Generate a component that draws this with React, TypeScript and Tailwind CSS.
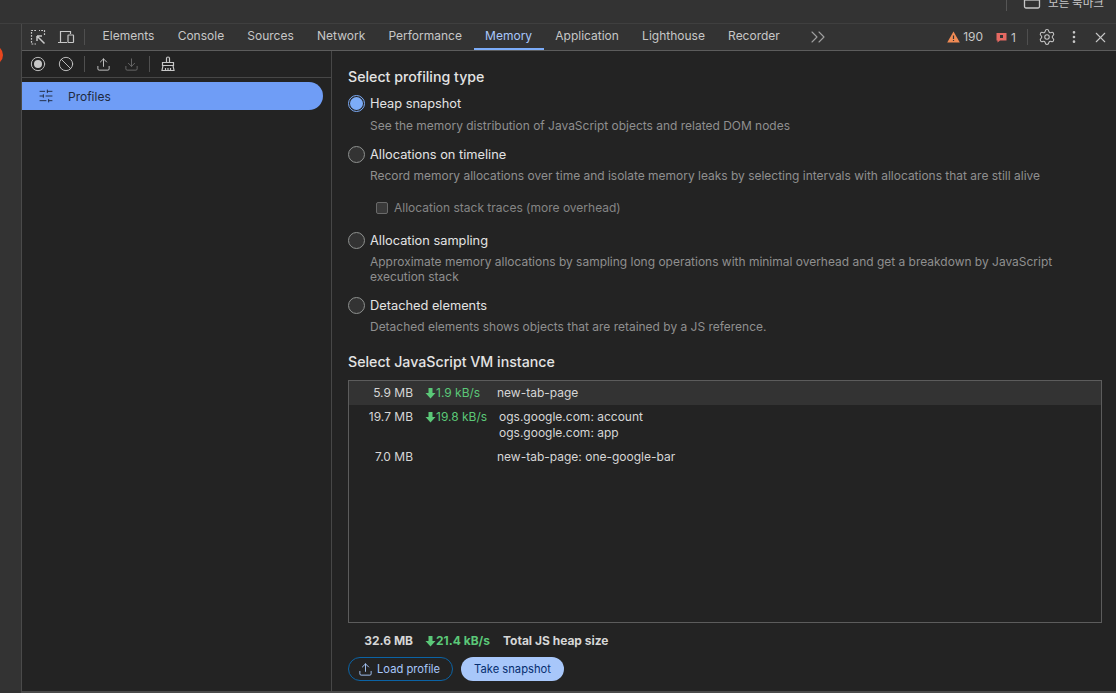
import { Circle, Ban, Upload, Download, EllipsisVertical, X, ChevronsRight, SlidersHorizontal, Settings } from 'lucide-react';

const tabs = ['Elements', 'Console', 'Sources', 'Network', 'Performance', 'Memory', 'Application', 'Lighthouse', 'Recorder'];

function Radio({ checked }: { checked?: boolean }) {
  return (
    <span className={`w-[17px] h-[17px] -mt-[2px] rounded-full border flex items-center justify-center shrink-0 ${checked ? 'border-[#7cacf8]' : 'border-[#8e918f] bg-[#333333]'}`}>
      {checked && <span className="w-[13px] h-[13px] rounded-full bg-[#7cacf8]" />}
    </span>
  );
}

function Option({ label, desc, checked, className, descClass = 'mt-[4px]' }: { label: string; desc: string; checked?: boolean; className?: string; descClass?: string }) {
  return (
    <div className={className}>
      <div className="flex items-center gap-[5px] h-[18px] text-[12.8px] text-[#e3e3e3]">
        <Radio checked={checked} />
        {label}
      </div>
      <p className={`ml-[22px] text-[11.98px] leading-[15px] text-[#8f8f8f] ${descClass}`}>{desc}</p>
    </div>
  );
}

function Speed({ value, bold }: { value: string; bold?: boolean }) {
  return (
    <span className={`flex items-center text-[#5bc878] ${bold ? 'font-bold' : ''}`}>
      <svg width="11" height="12" viewBox="0 0 11 12" fill="currentColor">
        <path d="M3.5 1h4v5h3L5.5 11.5.5 6h3z" />
      </svg>
      {value}
    </span>
  );
}

export default function App() {
  return (
    <div className="w-[1116px] h-[693px] overflow-hidden flex flex-col bg-[#333333] text-[12px] font-['Inter',sans-serif] text-[#c7c7c7]">
      {/* browser bookmarks bar, cut off at the top */}
      <div className="h-[24px] shrink-0 flex items-start justify-end border-b border-[#3f3f3f] overflow-hidden">
        <div className="w-px h-[11px] bg-[#555555] mr-[16px]" />
        <svg width="18" height="16" viewBox="0 0 18 16" fill="none" stroke="#c7c7c7" strokeWidth="1.3" className="mr-[7px] -mt-[6px]">
          <path d="M1.5 3.5a1.5 1.5 0 0 1 1.5-1.5h12a1.5 1.5 0 0 1 1.5 1.5v9a1.5 1.5 0 0 1-1.5 1.5H3a1.5 1.5 0 0 1-1.5-1.5z" />
          <path d="M1.5 6h15" />
        </svg>
        <span className="mr-[12px] -mt-[6px] text-[11.6px] leading-[16px] font-['Noto_Sans_CJK_KR',sans-serif]">모든 북마크</span>
      </div>

      <div className="flex flex-1 min-h-0">
        {/* sliver of the page behind devtools */}
        <div className="w-[21px] shrink-0 relative overflow-hidden">
          <span className="absolute -left-[17px] top-[21px] w-[20px] h-[20px] rounded-full bg-[#e8461e]" />
        </div>

        <div className="flex-1 min-w-0 flex flex-col border-l border-[#4a4a4a] border-b-2">
          {/* main tab bar */}
          <div className="h-[27px] shrink-0 flex items-center border-b border-[#5c5c5c]">
            <div className="flex items-center pl-[8px] text-[#c7c7c7]">
              <svg width="16" height="16" viewBox="0 0 16 16" fill="none" stroke="currentColor" strokeWidth="1.2">
                <path d="M6 1.5H1.5V15H6M14.5 6V1.5H9" strokeDasharray="1.8 1.2" />
                <path d="M7 7l7.5 7.5M7 7v5M7 7h5" strokeWidth="1.5" />
              </svg>
              <svg width="18" height="16" viewBox="0 0 18 16" fill="none" stroke="currentColor" strokeWidth="1.2" className="ml-[11px]">
                <path d="M3.5 13V2.5h10V5M1 13.5h9" />
                <rect x="11" y="6" width="5.5" height="7.5" rx="0.5" />
              </svg>
              <span className="w-px h-[16px] bg-[#4f4f4f] ml-[9px]" />
            </div>
            <div className="flex items-center h-full ml-[6px]">
              {tabs.map((t) => (
                <div
                  key={t}
                  className={`h-full flex items-center px-[11.6px] border-b-2 ${t === 'Memory' ? 'border-[#7cacf8] text-[#a8c7fa]' : 'border-transparent'}`}
                >
                  {t}
                </div>
              ))}
              <ChevronsRight size={24} strokeWidth={1.1} className="ml-[15px] text-[#a0a0a0]" />
            </div>
            <div className="ml-auto flex items-center pr-[7px]">
              <svg width="13" height="12" viewBox="0 0 13 12" className="mr-[3px]">
                <path d="M6.5 0.5L12.8 11.5H0.2z" fill="#f28b54" />
                <path d="M6.5 4.5v3.5M6.5 9v1" stroke="#333333" strokeWidth="1.2" />
              </svg>
              <span>190</span>
              <svg width="11" height="11" viewBox="0 0 11 11" className="ml-[13px] mr-[4px]">
                <path d="M0.5 1h10v7.5H4L1.5 10.5V8.5h-1z" fill="#e46962" />
                <rect x="4" y="3" width="3" height="3" fill="#333333" />
              </svg>
              <span className="mt-[1px]">1</span>
              <span className="w-px h-[16px] bg-[#4f4f4f] ml-[11px]" />
              <Settings size={18} strokeWidth={1.4} className="ml-[10px]" />
              <EllipsisVertical size={16} strokeWidth={2} className="ml-[10px]" />
              <X size={17} strokeWidth={1.5} className="ml-[10px]" />
            </div>
          </div>

          <div className="flex flex-1 min-h-0 bg-[#232323]">
            {/* profiles sidebar */}
            <div className="w-[310px] shrink-0 border-r border-[#474747] flex flex-col">
              <div className="h-[27px] shrink-0 flex items-center pl-[8px] border-b border-[#474747]">
                <Circle size={16} strokeWidth={1.4} className="text-[#c7c7c7] fill-none" />
                <span className="w-[8px] h-[8px] rounded-full bg-[#c7c7c7] -ml-[12px]" />
                <Ban size={16} strokeWidth={1.4} className="ml-[16px]" />
                <span className="w-px h-[16px] bg-[#4f4f4f] ml-[10px]" />
                <Upload size={15} strokeWidth={1.5} className="ml-[11px]" />
                <Download size={15} strokeWidth={1.5} className="ml-[13px] text-[#6a6a6a]" />
                <span className="w-px h-[16px] bg-[#4f4f4f] ml-[10px]" />
                <svg width="16" height="16" viewBox="0 0 16 16" fill="none" stroke="currentColor" strokeWidth="1.2" className="ml-[10px]">
                  <path d="M6.5 6V2.5a1.5 1.5 0 0 1 3 0V6M2.5 6.5h11v3h-11zM3 9.5l-1 5h12l-1-5M5.5 12v2.5M8 12v2.5M10.5 12v2.5" />
                </svg>
              </div>
              <div className="mt-[4px] mr-[8px] h-[28px] rounded-r-full bg-[#6f9df6] flex items-center text-[#1f2a40]">
                <SlidersHorizontal size={16} strokeWidth={1.4} className="ml-[16px]" />
                <span className="ml-[14px] mt-[2px]">Profiles</span>
              </div>
            </div>

            {/* profiling launcher */}
            <div className="flex-1 min-w-0 flex flex-col pl-[16px] pr-[14px]">
              <h2 className="mt-[17px] text-[14.2px] leading-[17px] font-medium text-[#e3e3e3]">Select profiling type</h2>
              <Option className="mt-[10px]" descClass="mt-[5px]" checked label="Heap snapshot" desc="See the memory distribution of JavaScript objects and related DOM nodes" />
              <Option className="mt-[13px]" label="Allocations on timeline" desc="Record memory allocations over time and isolate memory leaks by selecting intervals with allocations that are still alive" />
              <div className="ml-[28px] mt-[17px] flex items-center gap-[6px] h-[15px] text-[#858585]">
                <span className="w-[12px] h-[12px] rounded-[2px] border border-[#6a6a6a] bg-[#3a3a3a]" />
                Allocation stack traces (more overhead)
              </div>
              <Option className="mt-[17px]" label="Allocation sampling" desc="Approximate memory allocations by sampling long operations with minimal overhead and get a breakdown by JavaScript execution stack" />
              <Option className="mt-[13px]" label="Detached elements" desc="Detached elements shows objects that are retained by a JS reference." />
              <h2 className="mt-[19px] text-[14.2px] leading-[17px] font-medium text-[#e3e3e3]">Select JavaScript VM instance</h2>

              <div className="mt-[10px] h-[243px] shrink-0 border border-[#5c5c5c] text-[#d6d6d6]">
                <div className="h-[24px] bg-[#333333] flex items-center">
                  <span className="w-[64px] text-right">5.9 MB</span>
                  <span className="ml-[12px] w-[72px]"><Speed value="1.9 kB/s" /></span>
                  <span>new-tab-page</span>
                </div>
                <div className="flex pt-[4px] leading-[16px]">
                  <span className="w-[64px] text-right">19.7 MB</span>
                  <span className="ml-[12px] w-[74px]"><Speed value="19.8 kB/s" /></span>
                  <span>ogs.google.com: account<br />ogs.google.com: app</span>
                </div>
                <div className="flex pt-[8px] leading-[16px]">
                  <span className="w-[64px] text-right">7.0 MB</span>
                  <span className="ml-[84px]">new-tab-page: one-google-bar</span>
                </div>
              </div>

              <div className="mt-[10px] h-[16px] flex items-center font-bold text-[#d6d6d6]">
                <span className="w-[65px] text-right">32.6 MB</span>
                <span className="ml-[12px] w-[78px]"><Speed bold value="21.4 kB/s" /></span>
                <span>Total JS heap size</span>
              </div>

              <div className="mt-[8px] flex gap-[8px] text-[11.2px]">
                <div className="h-[24px] w-[105px] pl-[9px] rounded-full border border-[#0b63a5] flex items-center gap-[4px] text-[#a8c7fa]">
                  <Upload size={15} strokeWidth={1.5} />
                  Load profile
                </div>
                <div className="h-[24px] w-[103px] rounded-full bg-[#a8c7fa] flex items-center justify-center text-[#062e6f]">
                  Take snapshot
                </div>
              </div>
            </div>
          </div>
        </div>
      </div>
    </div>
  );
}
